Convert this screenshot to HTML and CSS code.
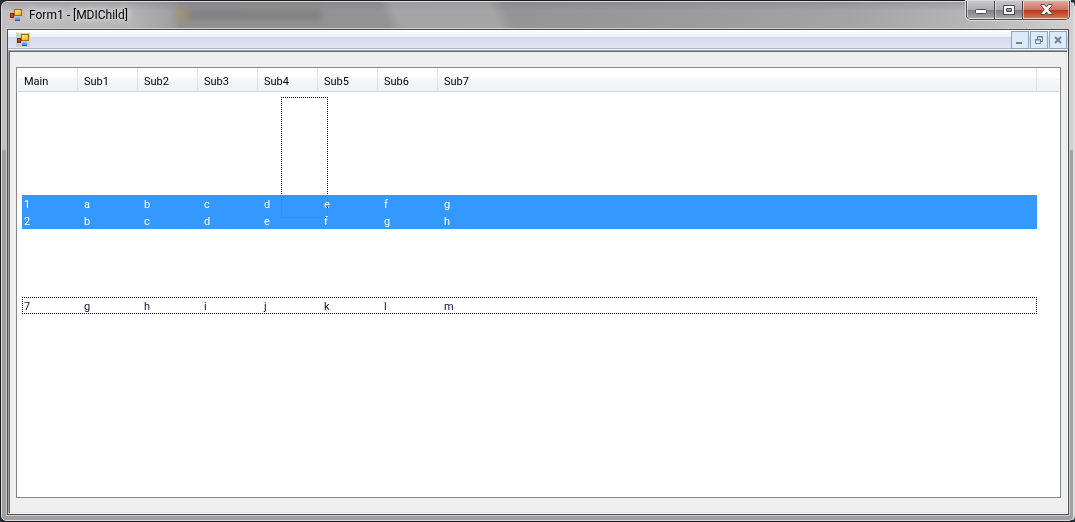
FILE: index.html
```html
<!DOCTYPE html>
<html lang="en">
<head>
  <meta charset="UTF-8">
  <meta name="viewport" content="width=device-width, initial-scale=1.0">
  <title>Form1 - [MDIChild]</title>
  <link rel="stylesheet" href="styles.css">
</head>
<body>
  <svg width="0" height="0" class="defs" aria-hidden="true">
    <defs>
      <linearGradient id="gold" x1="0" y1="0" x2="1" y2="1">
        <stop offset="0" stop-color="#fff0a0"/>
        <stop offset="1" stop-color="#eda80c"/>
      </linearGradient>
      <linearGradient id="red" x1="0" y1="0" x2="1" y2="1">
        <stop offset="0" stop-color="#f07a50"/>
        <stop offset="1" stop-color="#a81408"/>
      </linearGradient>
      <linearGradient id="blue" x1="0" y1="0" x2="0" y2="1">
        <stop offset="0" stop-color="#8cc0ff"/>
        <stop offset="1" stop-color="#2e6ce0"/>
      </linearGradient>
      <symbol id="form-icon" viewBox="0 0 14 14">
        <rect x="5.5" y="1.500" width="7" height="6" fill="url(#gold)" stroke="#9c6a08"/>
        <rect x="1.5" y="5.500" width="3" height="4" fill="url(#red)" stroke="#8c1c10"/>
        <rect x="6" y="9" width="5" height="4" fill="url(#blue)"/>
        <path d="M6 12.500h5" stroke="#2a56b8"/>
      </symbol>
    </defs>
  </svg>

  <div class="window">
    <header class="title-bar">
      <svg class="form-icon" width="14" height="14"><use href="#form-icon"/></svg>
      <h1>Form1 - [MDIChild]</h1>
      <div class="glass-ghost"></div>
      <div class="caption-buttons">
        <button type="button" class="caption minimize" aria-label="Minimize">
          <svg width="14" height="8" viewBox="0 0 14 8"><rect x="1.5" y="3.5" width="11" height="4" rx="1" fill="#fff" stroke="#4b4b5a"/></svg>
        </button>
        <button type="button" class="caption maximize" aria-label="Maximize">
          <svg width="12" height="10" viewBox="0 0 12 10"><path fill="#fff" fill-rule="evenodd" stroke="#4b4b5a" d="M.5.5h11v9H.5zM3.500 3.500h5v3h-5z"/></svg>
        </button>
        <button type="button" class="caption close" aria-label="Close">
          <svg width="13" height="11" viewBox="0 0 13 11"><path fill="#fff" stroke="#5c4650" d="M1 .5h3.500l2 2.500 2-2.500H12v1L8.800 5.500 12 9.500v1H8.500l-2-2.500-2 2.500H1v-1l3.200-4L1 1.500z"/></svg>
        </button>
      </div>
    </header>

    <div class="client">
      <nav class="menu-strip">
        <svg class="form-icon boxed" width="14" height="14"><use href="#form-icon"/></svg>
        <div class="mdi-buttons">
          <button type="button" class="mdi" aria-label="Minimize child">
            <svg width="12" height="12" viewBox="0 0 12 12"><path d="M2 9h6" stroke="#72808f" stroke-width="2"/></svg>
          </button>
          <button type="button" class="mdi" aria-label="Restore child">
            <svg width="12" height="12" viewBox="0 0 12 12" fill="none" stroke="#72808f"><path d="M4.500 5V2.500h5v5H8M4 3h6M2.500 5.500h5v4h-5zM2 6h6"/></svg>
          </button>
          <button type="button" class="mdi" aria-label="Close child">
            <svg width="12" height="12" viewBox="0 0 12 12"><path d="M3 3l6 6M9 3l-6 6" stroke="#72808f" stroke-width="2"/></svg>
          </button>
        </div>
      </nav>

      <main class="mdi-area">
        <div class="list-view">
          <table>
            <colgroup>
              <col class="col"><col class="col"><col class="col"><col class="col">
              <col class="col"><col class="col"><col class="col"><col><col class="col-end">
            </colgroup>
            <thead>
              <tr>
                <th>Main</th><th>Sub1</th><th>Sub2</th><th>Sub3</th>
                <th>Sub4</th><th>Sub5</th><th>Sub6</th><th>Sub7</th><th class="end"></th>
              </tr>
            </thead>
            <tbody>
              <tr class="gap-top"><td colspan="9"></td></tr>
              <tr class="selected">
                <td>1</td><td>a</td><td>b</td><td>c</td><td>d</td><td>e</td><td>f</td><td>g</td><td class="end"></td>
              </tr>
              <tr class="selected">
                <td>2</td><td>b</td><td>c</td><td>d</td><td>e</td><td>f</td><td>g</td><td>h</td><td class="end"></td>
              </tr>
              <tr class="gap-rows"><td colspan="9"></td></tr>
              <tr class="focused">
                <td>7</td><td>g</td><td>h</td><td>i</td><td>j</td><td>k</td><td>l</td><td>m</td><td class="end"></td>
              </tr>
            </tbody>
          </table>
          <div class="marquee"></div>
        </div>
      </main>
    </div>
  </div>
</body>
</html>
```
FILE: styles.css
```css
* {
  box-sizing: border-box;
}

body {
  margin: 0;
  background: #26303a;
  font-family: Roboto, "Open Sans", sans-serif;
  font-size: 11px;
  color: #000;
}

.defs {
  position: absolute;
}

.window {
  display: flex;
  flex-direction: column;
  min-height: 100vh;
  padding: 0 4px 5px 5px;
  border: 1px solid #1c1a20;
  border-right-color: #d8d8d8;
  border-radius: 7px 7px 6px 6px;
  box-shadow: inset 0 0 0 1px #dcdcdc;
  background:
    linear-gradient(to bottom, rgba(120, 115, 130, 0.4), rgba(120, 115, 130, 0) 10px),
    linear-gradient(to bottom, transparent 148px, #a0a0a0 150px),
    linear-gradient(to right, #c2c0c0 0, #b4b4b4 130px, #a2a2a4 168px, #929292 180px, #949494 500px, #9c9c9c 700px, #a4a4a4 850px, #b4b4b4 960px, #d0d0d0 100%);
}

.title-bar {
  position: relative;
  display: flex;
  align-items: center;
  height: 27px;
  padding-left: 3px;
  background: linear-gradient(65deg, transparent 348px, rgba(255, 255, 255, 0.16) 360px, rgba(255, 255, 255, 0.16) 448px, transparent 462px);
}

.title-bar h1 {
  margin: 0 0 0 6px;
  font-size: 12px;
  font-weight: normal;
  line-height: 16px;
  text-shadow: 0 0 6px #fff, 0 0 10px #ddd;
}

.form-icon {
  flex: none;
}

/* window behind the glass */
.glass-ghost {
  width: 146px;
  height: 10px;
  margin-left: 48px;
  background: linear-gradient(to right, #a89468 8px, #7c7c7c 14px);
  filter: blur(3px);
  opacity: 0.8;
}

.caption-buttons {
  position: absolute;
  top: 0;
  right: 0;
  display: flex;
  border: 1px solid #4d4a50;
  border-top: none;
  border-radius: 0 0 5px 5px;
  box-shadow: 0 0 0 1px #dcdcdc;
  overflow: hidden;
}

button {
  display: flex;
  align-items: center;
  justify-content: center;
  margin: 0;
  padding: 0;
}

.caption {
  width: 28px;
  height: 18px;
  border: 1px solid rgba(255, 255, 255, 0.5);
  border-top: none;
  background: linear-gradient(#c8c6c9, #b0adb2 50%, #7e7b82 52%, #a7a5aa);
}

.caption + .caption {
  box-shadow: -1px 0 #4d4a50;
}

.close {
  width: 46px;
  background: linear-gradient(#e3a89c, #cf7466 50%, #b6331c 52%, #dc7048);
}

.client {
  flex: 1;
  display: flex;
  flex-direction: column;
  border: 1px solid #4c4c4c;
  outline: 1px solid #cfcfcf;
  margin: 1px;
  background: #efefef;
}

.menu-strip {
  display: flex;
  align-items: center;
  justify-content: space-between;
  height: 20px;
  padding: 0 1px 0 8px;
  background: linear-gradient(#fff 0, #e9edf6 7px, #d2daec 7px, #dfe6f5 18px, #a9b6cc 18px, #a9b6cc 19px, #f5f6fa 19px);
}

.boxed {
  background: #cfcfd3;
}

.mdi-buttons {
  display: flex;
  gap: 1px;
}

.mdi {
  width: 18px;
  height: 18px;
  border: 1px solid #93a5b8;
  background: #dcebfa;
}

.mdi-area {
  flex: 1;
  display: flex;
  padding: 16px 6px 15px 7px;
  border: 1px solid;
  border-color: #a0a0a0 #fff #fff #a0a0a0;
  box-shadow: inset 1px 1px #696969, inset -1px -1px #e3e3e3;
}

.list-view {
  position: relative;
  flex: 1;
  padding: 0 1px;
  border: 1px solid #828790;
  background: #fff;
}

table {
  width: 100%;
  table-layout: fixed;
  border-spacing: 0;
}

.col {
  width: 60px;
}

.col-end {
  width: 22px;
}

th {
  height: 24px;
  padding: 4px 0 0 6px;
  border-right: 1px solid #e0e1e3;
  border-bottom: 1px solid #d5d5d5;
  background: linear-gradient(#fff 10px, #f6f7f8 10px, #f1f2f4);
  font-weight: normal;
  line-height: 16px;
  text-align: left;
}

th.end {
  border-right: none;
}

td {
  height: 17px;
  padding: 2px 0 0 6px;
  line-height: 15px;
}

td:first-child {
  padding-left: 2px;
  border-left: 4px solid transparent;
  background-clip: padding-box;
}

.gap-top td {
  height: 103px;
}

.gap-rows td {
  height: 68px;
}

.selected td:not(.end) {
  background-color: #3399ff;
  color: #fff;
}

.focused {
  position: relative;
  color: #101038;
}

/* focus rectangle spans the whole row */
.focused td:first-child::after {
  content: "";
  position: absolute;
  inset: 0 22px 0 4px;
  border: 1px dotted #000;
}

/* rubber band, inverts whatever it crosses */
.marquee {
  position: absolute;
  top: 29px;
  left: 264px;
  width: 47px;
  height: 121px;
  border: 1px dotted #fff;
  mix-blend-mode: difference;
}
```
